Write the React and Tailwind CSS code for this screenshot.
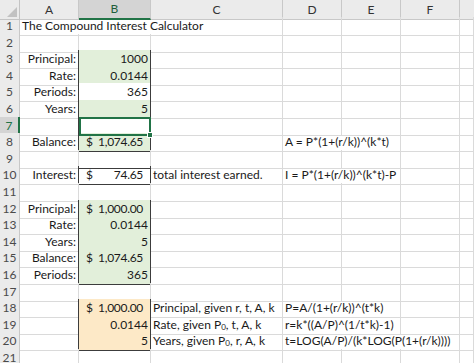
import React from "react";

const COLS = "grid grid-cols-[20px_59px_72px_132px_59px_59px_59px_1fr]";

function Row({ n, sel, children }) {
  return (
    <div className={`${COLS} h-[16.6px]`}>
      <div
        className={
          sel
            ? "flex items-center justify-center bg-[#d4d4d4] text-[#217346] border-b border-b-[#c4c4c4] border-r-2 border-r-[#217346]"
            : "flex items-center justify-center bg-[#ebebeb] text-[#4a4a4a] border-r border-b border-[#c8c8c8]"
        }
      >
        {n}
      </div>
      {children}
    </div>
  );
}

function Cell({ className = "", children }) {
  return (
    <div
      className={`flex items-center px-[2px] whitespace-nowrap overflow-hidden border-r border-b border-[#dadada] ${className}`}
    >
      {children}
    </div>
  );
}

function Money({ v }) {
  return (
    <div className="flex w-full justify-between pl-[5px] pr-[5px]">
      <span>$</span>
      <span className="tracking-[-0.3px]">{v}</span>
    </div>
  );
}

// empty cells after the used ones
function Blank({ from }) {
  const all = ["A", "B", "C", "D", "E", "F", "G"];
  return all.slice(all.indexOf(from)).map((c) => <Cell key={c} />);
}

export default function App() {
  const label = "justify-end border-r-[#3c3c3c]";
  const green = "justify-end bg-[#e2efda] border-r-[#3c3c3c] border-b-[#f3f3f3]";
  const white = "justify-end bg-white border-r-[#3c3c3c] border-b-[#e6e6e6]";
  const orange = "justify-end bg-[#fde9c7] border-r-[#3c3c3c] border-b-[#f6f0e4]";
  const sub = <sub className="text-[8px]">0</sub>;

  return (
    <div className="w-[474px] h-[363px] overflow-hidden bg-white text-[12px] text-[#1a1a1a] font-['Lato','Liberation_Sans',sans-serif]">
      {/* column headers */}
      <div className={`${COLS} h-[17px] text-[#333]`}>
        <div className="relative bg-[#ebebeb] border-r border-b border-[#c4c4c4]">
          <svg className="absolute right-[2px] bottom-[2px]" width="10" height="10" viewBox="0 0 10 10">
            <polygon points="10,0 10,10 0,10" fill="#c2c2c2" />
          </svg>
        </div>
        <div className="flex items-center justify-center bg-[#ebebeb] border-r border-b border-[#c8c8c8]">A</div>
        <div className="flex items-center justify-center bg-[#d4d4d4] text-[#1e5e3a] border-r border-r-[#c8c8c8] border-b-2 border-b-[#217346]">B</div>
        <div className="flex items-center justify-center bg-[#ebebeb] border-r border-b border-[#c8c8c8]">C</div>
        <div className="flex items-center justify-center bg-[#ebebeb] border-r border-b border-[#c8c8c8]">D</div>
        <div className="flex items-center justify-center bg-[#ebebeb] border-r border-b border-[#c8c8c8]">E</div>
        <div className="flex items-center justify-center bg-[#ebebeb] border-r border-b border-[#c8c8c8]">F</div>
        <div className="bg-[#ebebeb] border-b border-[#c8c8c8]"></div>
      </div>

      <Row n={1}>
        <Cell className="col-span-3">The Compound Interest Calculator</Cell>
        <Blank from="D" />
      </Row>
      <Row n={2}>
        <Cell />
        <Cell className="border-b-[#3c3c3c]" />
        <Blank from="C" />
      </Row>
      <Row n={3}>
        <Cell className={label}>Principal:</Cell>
        <Cell className={green}>1000</Cell>
        <Blank from="C" />
      </Row>
      <Row n={4}>
        <Cell className={label}>Rate:</Cell>
        <Cell className={green}>0.0144</Cell>
        <Blank from="C" />
      </Row>
      <Row n={5}>
        <Cell className={label}>Periods:</Cell>
        <Cell className={white}>365</Cell>
        <Blank from="C" />
      </Row>
      <Row n={6}>
        <Cell className={label}>Years:</Cell>
        <Cell className={green}>5</Cell>
        <Blank from="C" />
      </Row>
      <Row n={7} sel>
        <Cell className="border-r-[#3c3c3c]" />
        <div className="relative border-2 border-[#217346]">
          <div className="absolute -right-[4px] -bottom-[4px] w-[6px] h-[6px] bg-[#217346] border border-white" />
        </div>
        <Blank from="C" />
      </Row>
      <Row n={8}>
        <Cell className={label}>Balance:</Cell>
        <Cell className="px-0 bg-[#e2efda] border-r-[#3c3c3c] border-b-[#3c3c3c]">
          <Money v="1,074.65" />
        </Cell>
        <Cell />
        <Cell className="col-span-2">A = P*(1+(r/k))^(k*t)</Cell>
        <Blank from="F" />
      </Row>
      <Row n={9}>
        <Cell />
        <Cell className="border-b-[#3c3c3c]" />
        <Blank from="C" />
      </Row>
      <Row n={10}>
        <Cell className={label}>Interest:</Cell>
        <Cell className="px-0 border-r-[#3c3c3c] border-b-[#3c3c3c]">
          <Money v="74.65" />
        </Cell>
        <Cell>total interest earned.</Cell>
        <Cell className="col-span-2">I = P*(1+(r/k))^(k*t)-P</Cell>
        <Blank from="F" />
      </Row>
      <Row n={11}>
        <Cell />
        <Cell className="border-b-[#3c3c3c]" />
        <Blank from="C" />
      </Row>
      <Row n={12}>
        <Cell className={label}>Principal:</Cell>
        <Cell className={`${green} px-0`}>
          <Money v="1,000.00" />
        </Cell>
        <Blank from="C" />
      </Row>
      <Row n={13}>
        <Cell className={label}>Rate:</Cell>
        <Cell className={green}>0.0144</Cell>
        <Blank from="C" />
      </Row>
      <Row n={14}>
        <Cell className={label}>Years:</Cell>
        <Cell className={green}>5</Cell>
        <Blank from="C" />
      </Row>
      <Row n={15}>
        <Cell className={label}>Balance:</Cell>
        <Cell className={`${green} px-0`}>
          <Money v="1,074.65" />
        </Cell>
        <Blank from="C" />
      </Row>
      <Row n={16}>
        <Cell className={label}>Periods:</Cell>
        <Cell className="justify-end bg-[#e2efda] border-r-[#3c3c3c] border-b-[#3c3c3c]">365</Cell>
        <Blank from="C" />
      </Row>
      <Row n={17}>
        <Cell />
        <Cell className="border-b-[#3c3c3c]" />
        <Blank from="C" />
      </Row>
      <Row n={18}>
        <Cell className="border-r-[#3c3c3c]" />
        <Cell className={`${orange} px-0`}>
          <Money v="1,000.00" />
        </Cell>
        <Cell>Principal, given r, t, A, k</Cell>
        <Cell className="col-span-2">P=A/(1+(r/k))^(t*k)</Cell>
        <Blank from="F" />
      </Row>
      <Row n={19}>
        <Cell className="border-r-[#3c3c3c]" />
        <Cell className={orange}>0.0144</Cell>
        <Cell>
          Rate, given P{sub}, t, A, k
        </Cell>
        <Cell className="col-span-2">r=k*((A/P)^(1/t*k)-1)</Cell>
        <Blank from="F" />
      </Row>
      <Row n={20}>
        <Cell className="border-r-[#3c3c3c]" />
        <Cell className="justify-end bg-[#fde9c7] border-r-[#3c3c3c] border-b-[#3c3c3c]">5</Cell>
        <Cell>
          Years, given P{sub}, r, A, k
        </Cell>
        <Cell className="col-span-3">t=LOG(A/P)/(k*LOG(P(1+(r/k))))</Cell>
        <Blank from="G" />
      </Row>
      <Row n={21}>
        <Blank from="A" />
      </Row>
    </div>
  );
}
